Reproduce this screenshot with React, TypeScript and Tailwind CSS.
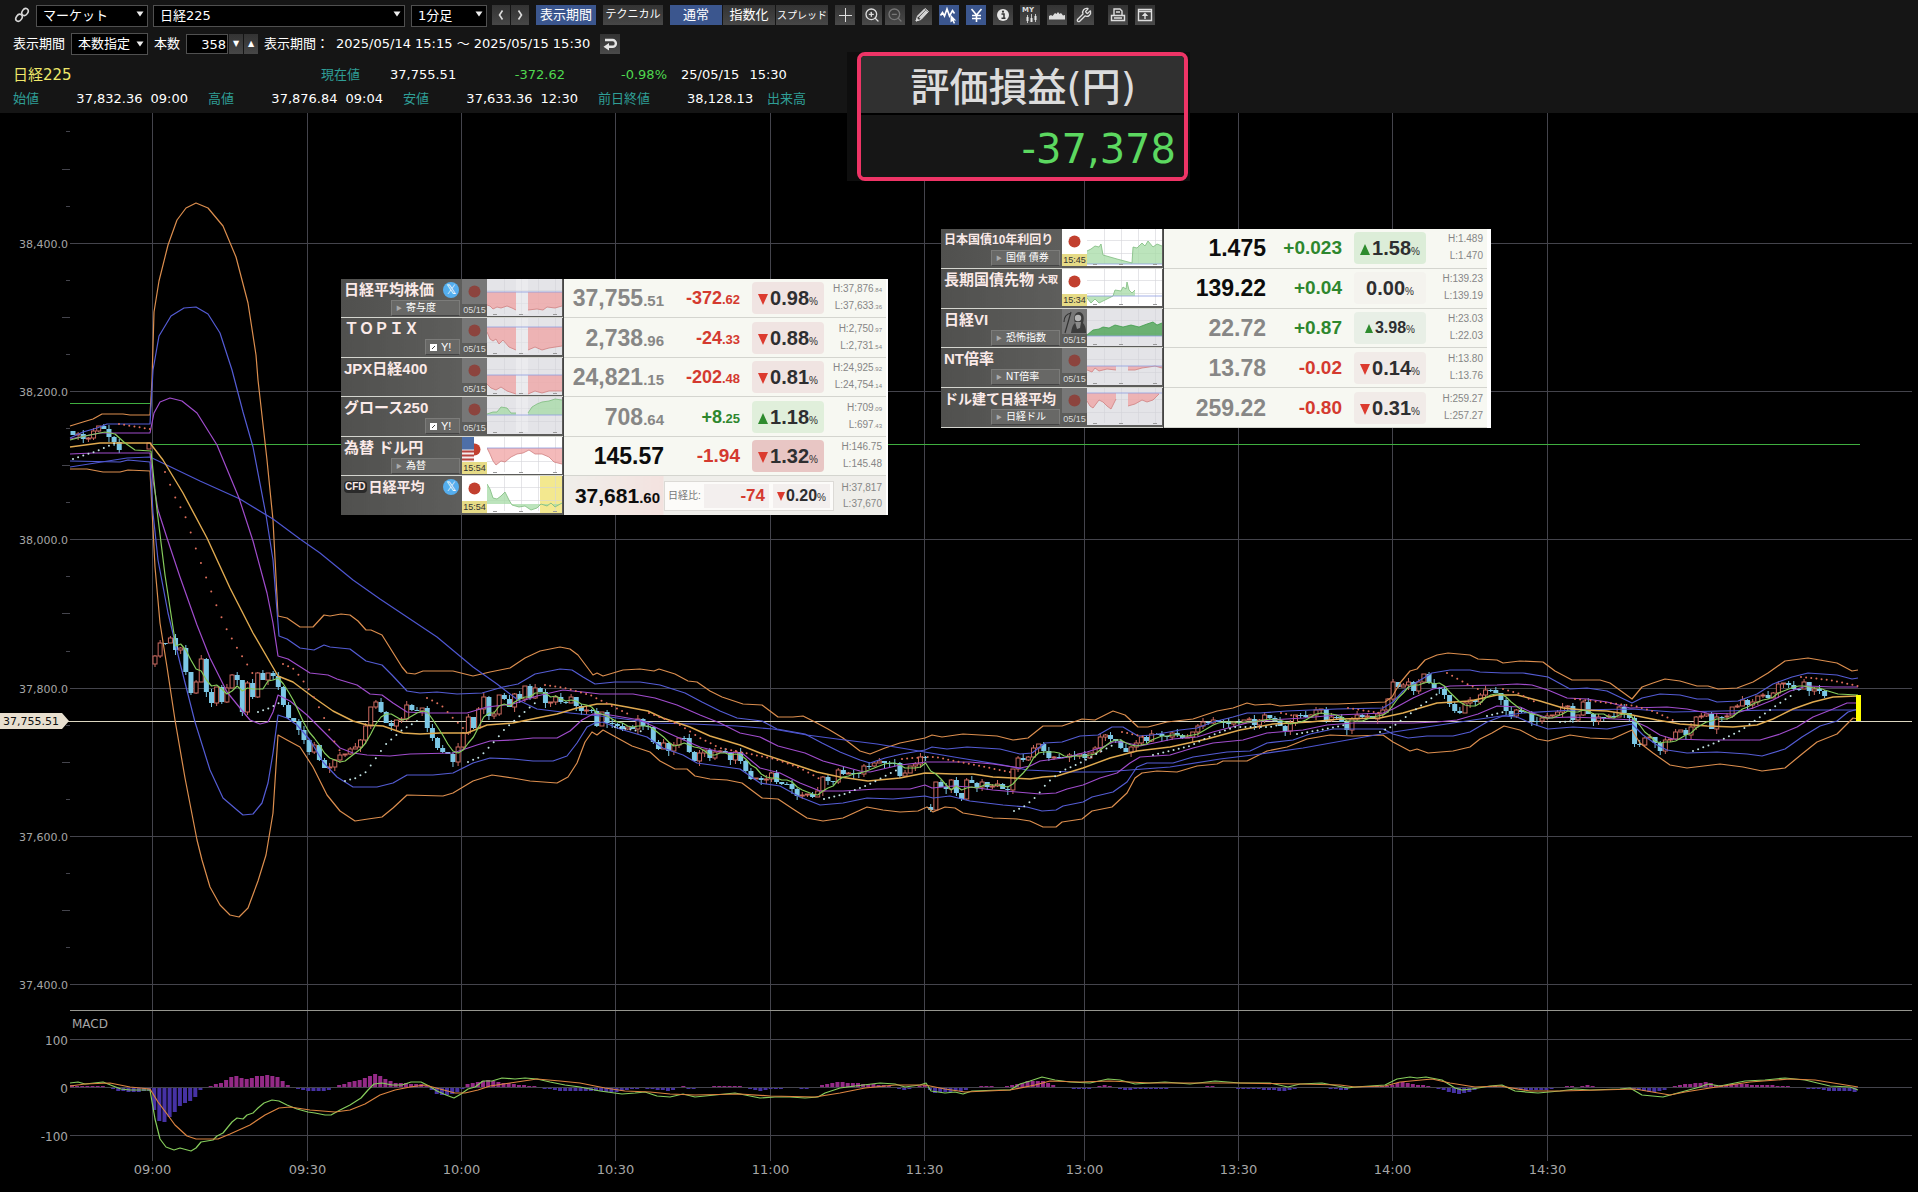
import type { ReactNode } from "react"
import { ZoomIn, ZoomOut, Wrench } from "lucide-react"

type Point = [number, number]

const UI_FONT = "font-['DejaVu_Sans','Noto_Sans_CJK_JP',sans-serif]"
const BOARD_FONT = "font-['Liberation_Sans','Noto_Sans_CJK_JP',sans-serif]"

/* ---------- chart data (svg units) ---------- */

const upper3: Point[] = [
  [70, 426], [83, 422], [93, 419], [102, 414], [123, 414], [130, 415], [150, 415], [152, 380], [154, 312], [159, 281],
  [168, 245], [177, 220], [186, 208], [196, 203], [208, 208], [223, 226], [236, 257], [248, 303], [256, 355], [258, 380],
  [267, 460], [273, 520], [278, 616], [287, 618], [300, 627], [313, 627], [324, 615], [330, 616], [341, 614], [350, 615],
  [358, 621], [366, 630], [371, 630], [382, 635], [392, 651], [402, 667], [407, 673], [415, 674], [423, 671], [453, 671],
  [473, 676], [490, 672], [510, 668], [525, 658], [540, 651], [560, 647], [570, 649], [578, 655], [587, 667], [593, 675],
  [597, 673], [603, 676], [623, 670], [640, 669], [654, 671], [659, 669], [675, 674], [688, 681], [697, 682], [710, 691],
  [722, 697], [743, 704], [762, 705], [778, 717], [793, 717], [803, 716], [815, 722], [828, 729], [843, 738], [860, 751],
  [870, 754], [885, 748], [900, 743], [925, 738], [932, 735], [942, 737], [963, 734], [997, 736], [1013, 740], [1028, 738],
  [1043, 726], [1062, 726], [1082, 719], [1095, 720], [1113, 711], [1125, 715], [1138, 727], [1148, 727], [1167, 722],
  [1193, 719], [1217, 711], [1233, 708], [1247, 703], [1255, 705], [1270, 704], [1280, 706], [1307, 704], [1337, 704],
  [1385, 702], [1392, 697], [1400, 683], [1410, 671], [1417, 669], [1425, 660], [1437, 655], [1448, 653], [1470, 655],
  [1478, 659], [1497, 660], [1503, 663], [1520, 661], [1543, 662], [1555, 671], [1572, 680], [1600, 680], [1610, 683],
  [1632, 699], [1642, 687], [1653, 683], [1665, 679], [1680, 681], [1697, 686], [1708, 686], [1718, 689], [1737, 688],
  [1753, 682], [1768, 673], [1785, 661], [1808, 658], [1837, 663], [1852, 671], [1858, 670],
]

const upper2: Point[] = [
  [70, 438], [83, 432], [97, 428], [107, 424], [120, 424], [150, 424], [153, 370], [159, 336], [171, 316], [184, 308],
  [196, 307], [208, 314], [220, 333], [232, 370], [243, 412], [253, 447], [266, 515], [273, 560], [279, 636], [287, 639],
  [300, 648], [314, 650], [324, 645], [330, 647], [350, 649], [366, 661], [382, 665], [392, 675], [407, 691], [420, 693],
  [437, 692], [457, 694], [482, 693], [503, 687], [518, 684], [535, 674], [560, 669], [572, 670], [583, 677], [595, 684],
  [615, 682], [640, 682], [660, 685], [685, 693], [702, 702], [720, 711], [737, 718], [762, 721], [777, 729], [805, 734],
  [822, 743], [840, 752], [860, 760], [870, 763], [885, 758], [902, 754], [925, 750], [932, 747], [947, 749], [967, 747],
  [1000, 749], [1020, 754], [1032, 753], [1045, 743], [1062, 742], [1080, 736], [1098, 735], [1112, 727], [1123, 727],
  [1138, 736], [1153, 735], [1180, 730], [1197, 728], [1213, 722], [1233, 717], [1247, 713], [1260, 713], [1287, 711],
  [1337, 709], [1383, 708], [1393, 702], [1403, 691], [1417, 682], [1432, 673], [1450, 670], [1470, 670], [1480, 672],
  [1503, 673], [1523, 673], [1548, 677], [1570, 689], [1587, 688], [1607, 691], [1632, 703], [1642, 698], [1660, 694],
  [1680, 695], [1697, 699], [1708, 699], [1717, 702], [1738, 701], [1757, 694], [1773, 684], [1792, 677], [1808, 673],
  [1837, 675], [1852, 679], [1858, 678],
]

const upper1: Point[] = [
  [70, 439], [100, 433], [150, 433], [154, 413], [160, 402], [170, 398], [182, 401], [197, 413], [217, 445], [239, 498],
  [253, 541], [267, 593], [273, 623], [278, 656], [288, 659], [310, 673], [328, 675], [337, 679], [357, 685], [370, 694],
  [382, 695], [393, 703], [407, 712], [427, 713], [467, 713], [487, 707], [513, 704], [537, 696], [563, 690], [583, 692],
  [600, 694], [633, 694], [655, 698], [677, 705], [700, 715], [720, 723], [740, 733], [760, 737], [778, 746], [805, 753],
  [823, 761], [860, 771], [870, 772], [900, 765], [927, 762], [970, 762], [993, 764], [1020, 768], [1030, 766], [1040, 761],
  [1063, 758], [1087, 752], [1103, 747], [1113, 742], [1123, 742], [1140, 746], [1173, 739], [1197, 737], [1213, 732],
  [1247, 723], [1270, 720], [1303, 718], [1337, 715], [1383, 713], [1393, 709], [1413, 698], [1433, 689], [1450, 686],
  [1497, 685], [1517, 684], [1532, 685], [1548, 690], [1567, 698], [1587, 699], [1607, 702], [1630, 708], [1667, 707],
  [1687, 709], [1707, 713], [1733, 714], [1753, 708], [1773, 700], [1790, 691], [1807, 686], [1833, 687], [1858, 687],
]

const average25: Point[] = [
  [70, 447], [100, 443], [133, 443], [150, 443], [163, 460], [183, 493], [207, 538], [230, 588], [253, 633], [278, 676],
  [293, 682], [313, 697], [333, 711], [353, 721], [367, 725], [383, 726], [403, 733], [420, 734], [440, 733], [467, 733],
  [487, 725], [513, 723], [537, 718], [557, 714], [577, 708], [597, 704], [610, 704], [627, 707], [648, 711], [663, 718],
  [690, 727], [710, 736], [740, 745], [760, 753], [793, 764], [817, 772], [840, 777], [868, 781], [900, 778], [925, 773],
  [953, 774], [973, 774], [993, 777], [1013, 778], [1030, 779], [1043, 777], [1057, 776], [1083, 768], [1110, 758],
  [1137, 751], [1170, 747], [1207, 739], [1240, 730], [1273, 724], [1310, 722], [1340, 719], [1380, 718], [1403, 713],
  [1420, 708], [1437, 703], [1470, 701], [1497, 695], [1517, 695], [1540, 701], [1563, 708], [1583, 710], [1607, 711],
  [1632, 715], [1657, 720], [1680, 724], [1707, 726], [1733, 727], [1757, 725], [1773, 719], [1793, 709], [1813, 702],
  [1833, 697], [1857, 696],
]

const lower1: Point[] = [
  [70, 454], [93, 453], [150, 453], [153, 480], [158, 510], [167, 538], [180, 577], [197, 625], [210, 658], [227, 692],
  [240, 708], [250, 720], [260, 724], [268, 722], [273, 712], [278, 695], [290, 701], [307, 715], [320, 728], [340, 748],
  [353, 753], [367, 755], [390, 756], [410, 754], [453, 753], [477, 745], [490, 741], [513, 740], [533, 738], [557, 738],
  [570, 731], [582, 720], [593, 714], [610, 715], [640, 720], [657, 728], [677, 737], [700, 747], [720, 752], [742, 753],
  [760, 768], [780, 773], [800, 783], [820, 791], [843, 791], [877, 789], [910, 789], [925, 785], [932, 788], [953, 786],
  [970, 787], [993, 790], [1017, 792], [1040, 794], [1056, 793], [1067, 789], [1083, 785], [1100, 778], [1117, 773],
  [1130, 763], [1140, 757], [1170, 755], [1193, 748], [1213, 743], [1243, 740], [1267, 733], [1303, 730], [1327, 725],
  [1353, 723], [1387, 723], [1413, 723], [1437, 722], [1457, 720], [1478, 714], [1497, 706], [1520, 707], [1533, 713],
  [1548, 718], [1570, 717], [1597, 718], [1632, 720], [1647, 727], [1660, 735], [1673, 739], [1707, 740], [1760, 740],
  [1780, 734], [1797, 727], [1813, 717], [1833, 709], [1847, 703], [1858, 703],
]

const lower2: Point[] = [
  [70, 461], [120, 462], [128, 460], [150, 462], [153, 513], [158, 560], [168, 613], [180, 663], [195, 722], [210, 770],
  [223, 798], [237, 810], [243, 815], [253, 814], [262, 803], [268, 783], [273, 753], [278, 715], [287, 718], [297, 725],
  [310, 740], [323, 762], [337, 777], [353, 787], [377, 787], [393, 783], [407, 775], [433, 775], [453, 773], [473, 763],
  [490, 758], [513, 759], [533, 761], [553, 761], [567, 756], [577, 743], [587, 727], [595, 723], [603, 722], [620, 729],
  [647, 737], [663, 748], [683, 755], [697, 763], [740, 769], [760, 783], [780, 786], [800, 797], [820, 805], [843, 803],
  [867, 798], [893, 799], [925, 796], [933, 798], [950, 796], [970, 801], [1003, 805], [1027, 807], [1042, 811],
  [1056, 810], [1063, 806], [1083, 802], [1092, 797], [1113, 792], [1127, 782], [1137, 767], [1147, 763], [1173, 763],
  [1193, 757], [1227, 752], [1250, 751], [1267, 743], [1293, 740], [1310, 734], [1333, 729], [1383, 729], [1393, 734],
  [1408, 738], [1427, 736], [1453, 736], [1470, 732], [1487, 722], [1503, 716], [1517, 717], [1533, 724], [1548, 729],
  [1573, 727], [1607, 729], [1632, 724], [1643, 735], [1657, 745], [1667, 750], [1687, 753], [1717, 752], [1747, 754],
  [1762, 756], [1785, 749], [1802, 737], [1820, 726], [1837, 721], [1848, 712], [1858, 709],
]

const lower3: Point[] = [
  [70, 469], [87, 469], [103, 472], [120, 472], [128, 470], [150, 471], [155, 567], [160, 623], [167, 667], [175, 720],
  [185, 778], [197, 840], [202, 860], [210, 887], [220, 905], [230, 915], [239, 917], [248, 908], [258, 881], [266, 855],
  [273, 813], [278, 735], [287, 740], [300, 747], [313, 767], [327, 795], [340, 811], [355, 821], [368, 819], [382, 817],
  [393, 808], [407, 795], [443, 796], [453, 793], [473, 781], [492, 775], [513, 778], [530, 781], [557, 783], [568, 777],
  [577, 763], [585, 742], [592, 732], [597, 735], [603, 730], [632, 746], [650, 752], [660, 761], [675, 769], [687, 769],
  [695, 776], [710, 779], [727, 780], [742, 783], [762, 798], [778, 799], [793, 809], [807, 818], [823, 821], [843, 818],
  [867, 807], [883, 810], [900, 812], [918, 811], [927, 807], [933, 812], [945, 807], [955, 808], [963, 813], [993, 818],
  [1017, 819], [1030, 821], [1043, 827], [1056, 827], [1062, 822], [1082, 819], [1092, 811], [1112, 807], [1127, 793],
  [1135, 778], [1142, 773], [1157, 771], [1177, 772], [1197, 766], [1217, 764], [1223, 761], [1247, 761], [1267, 751],
  [1287, 747], [1307, 739], [1330, 735], [1353, 736], [1383, 735], [1393, 742], [1410, 751], [1417, 749], [1428, 753],
  [1453, 751], [1470, 747], [1480, 739], [1492, 733], [1504, 726], [1520, 730], [1537, 739], [1548, 741], [1570, 735],
  [1590, 738], [1612, 739], [1632, 730], [1640, 743], [1653, 753], [1670, 765], [1687, 768], [1720, 764], [1743, 767],
  [1762, 771], [1785, 768], [1802, 754], [1817, 742], [1837, 734], [1853, 718], [1858, 719],
]

const average75: Point[] = [
  [70, 467], [127, 458], [150, 457], [200, 481], [240, 499], [273, 519], [300, 539], [320, 553], [353, 580], [380, 599],
  [407, 617], [437, 637], [473, 667], [497, 684], [518, 700], [537, 709], [570, 713], [610, 717], [653, 723], [693, 724],
  [737, 726], [773, 729], [807, 735], [837, 739], [877, 744], [913, 750], [960, 758], [1003, 765], [1027, 770],
  [1070, 772], [1103, 772], [1130, 770], [1170, 767], [1220, 759], [1253, 755], [1303, 748], [1353, 739], [1387, 733],
  [1420, 728], [1453, 723], [1487, 718], [1523, 713], [1573, 710], [1632, 709], [1673, 712], [1773, 710], [1858, 710],
]

// one close per minute from 09:00
const closes = [
  656, 643, 643, 638, 650, 648, 672, 693, 682, 659, 692, 703, 687, 702, 688, 675, 680, 712, 683, 697,
  673, 680, 673, 676, 687, 705, 718, 721, 730, 740, 752, 745, 760, 768, 767, 760, 755, 754, 749, 747,
  740, 726, 707, 702, 712, 723, 726, 720, 719, 705, 710, 711, 708, 728, 738, 748, 752, 754, 762, 747,
  733, 717, 728, 709, 697, 716, 714, 695, 699, 707, 694, 699, 686, 698, 688, 692, 703, 702, 697, 702,
  703, 697, 706, 711, 710, 711, 726, 712, 723, 724, 726, 729, 727, 729, 719, 726, 727, 742, 749, 743,
  751, 745, 738, 738, 752, 761, 753, 750, 758, 752, 751, 753, 760, 752, 761, 771, 779, 778, 780, 779,
  773, 782, 784, 784, 789, 796, 795, 794, 797, 791, 777, 781, 782, 770, 774, 773, 773, 774, 766, 766,
  763, 761, 763, 763, 763, 776, 773, 766, 764, 757, 757, 810, 782, 787, 789, 780, 793, 799, 780, 783,
  787, 782, 787, 786, 784, 789, 790, 769, 758, 760, 757, 748, 744, 751, 758, 757, 757, 757, 755, 756,
  754, 758, 753, 748, 737, 735, 739, 741, 748, 752, 747, 743, 737, 741, 734, 734, 736, 737, 733, 735,
  738, 737, 732, 726, 722, 723, 720, 722, 722, 724, 722, 723, 720, 719, 725, 720, 715, 718, 721, 726,
  731, 723, 715, 715, 717, 715, 710, 709, 720, 717, 717, 722, 730, 719, 715, 717, 716, 719, 714, 710,
  699, 682, 687, 685, 682, 691, 682, 674, 683, 688, 689, 695, 704, 711, 713, 703, 700, 702, 695, 690,
  690, 693, 700, 711, 716, 710, 712, 713, 721, 721, 718, 716, 715, 712, 707, 706, 720, 715, 702, 714,
  721, 717, 717, 716, 717, 707, 713, 718, 744, 745, 738, 737, 743, 751, 740, 739, 732, 730, 735, 727,
  717, 716, 714, 729, 717, 717, 716, 707, 706, 700, 705, 702, 696, 695, 698, 693, 684, 683, 685, 689,
  689, 682, 691, 689, 691, 696,
]

const previousCloses = [435, 434, 439, 438, 431, 426, 429, 437, 442, 450]

const sarAbove: Point[][] = [
  [[119, 424], [150, 429]],
  [[165, 472], [175, 497], [186, 518], [196, 549], [207, 580], [217, 607], [227, 630], [237, 648], [253, 674]],
  [[283, 664], [294, 669], [304, 682], [315, 699], [325, 720], [335, 743], [340, 751]],
  [[427, 698], [437, 703], [443, 707], [453, 718], [463, 728]],
  [[545, 685], [565, 688], [590, 695], [612, 706], [632, 716]],
  [[649, 713], [680, 725], [700, 738], [720, 748], [745, 753], [775, 759], [800, 768], [820, 779]],
  [[902, 759], [925, 757], [935, 757], [975, 765], [1010, 772]],
  [[1122, 732], [1145, 737]],
  [[1281, 713], [1300, 717]],
  [[1348, 708], [1380, 713]],
  [[1447, 673], [1465, 683], [1482, 691]],
  [[1503, 689], [1520, 694], [1535, 702]],
  [[1575, 699], [1600, 702], [1635, 706], [1655, 712], [1675, 721]],
  [[1801, 677], [1830, 680], [1858, 686]],
]

const sarBelow: Point[][] = [
  [[73, 459], [97, 451], [115, 443]],
  [[258, 712], [270, 708], [279, 703]],
  [[345, 781], [356, 778], [366, 772], [376, 758], [386, 744], [402, 730], [422, 718]],
  [[468, 762], [480, 757], [494, 742], [504, 730], [515, 720], [535, 703]],
  [[615, 727], [645, 732]],
  [[824, 799], [845, 794], [870, 784], [885, 776], [897, 770]],
  [[1014, 811], [1025, 806], [1037, 796], [1047, 783], [1060, 772], [1080, 763], [1100, 752], [1113, 745]],
  [[1153, 755], [1190, 746], [1215, 734], [1235, 727], [1270, 727], [1283, 724]],
  [[1297, 734], [1320, 730], [1345, 725]],
  [[1380, 732], [1395, 725], [1415, 710], [1440, 692]],
  [[1487, 716], [1503, 712]],
  [[1560, 722], [1575, 721]],
  [[1693, 751], [1715, 743], [1740, 731], [1760, 717], [1780, 703], [1795, 693]],
]

const macdLine: Point[] = [
  [70, 1083], [78, 1082], [85, 1084], [103, 1082], [113, 1086], [121, 1089], [130, 1090], [150, 1090], [155, 1119],
  [160, 1139], [166, 1147], [174, 1150], [180, 1148], [191, 1151], [196, 1148], [201, 1142], [213, 1140], [217, 1136],
  [223, 1133], [232, 1122], [237, 1118], [243, 1119], [247, 1115], [253, 1113], [258, 1108], [264, 1103], [272, 1100],
  [279, 1101], [287, 1105], [297, 1109], [308, 1112], [315, 1113], [325, 1115], [331, 1115], [340, 1110], [350, 1105],
  [361, 1098], [368, 1090], [374, 1084], [382, 1083], [392, 1085], [402, 1085], [411, 1082], [421, 1082], [429, 1086],
  [437, 1091], [446, 1095], [454, 1098], [461, 1094], [468, 1089], [475, 1087], [483, 1081], [492, 1081], [502, 1078],
  [515, 1079], [525, 1078], [537, 1079], [550, 1082], [565, 1085], [580, 1087], [600, 1091], [622, 1094], [635, 1093],
  [645, 1092], [657, 1096], [670, 1097], [683, 1094], [695, 1097], [715, 1095], [735, 1093], [745, 1095], [760, 1098],
  [775, 1097], [790, 1097], [805, 1098], [818, 1097], [825, 1093], [840, 1088], [855, 1086], [880, 1083], [895, 1084],
  [905, 1087], [920, 1085], [926, 1083], [931, 1091], [945, 1093], [955, 1092], [963, 1094], [972, 1091], [1000, 1090],
  [1010, 1090], [1020, 1084], [1030, 1081], [1042, 1077], [1055, 1080], [1070, 1082], [1090, 1083], [1108, 1079],
  [1120, 1080], [1135, 1084], [1150, 1083], [1165, 1082], [1190, 1084], [1215, 1081], [1240, 1083], [1270, 1083],
  [1288, 1087], [1300, 1084], [1322, 1083], [1348, 1088], [1355, 1087], [1385, 1085], [1397, 1079], [1410, 1077],
  [1417, 1078], [1426, 1077], [1442, 1080], [1455, 1088], [1462, 1090], [1472, 1089], [1490, 1086], [1502, 1085],
  [1515, 1091], [1538, 1093], [1560, 1091], [1575, 1089], [1590, 1090], [1620, 1089], [1630, 1088], [1642, 1095],
  [1663, 1097], [1685, 1091], [1700, 1087], [1708, 1084], [1720, 1086], [1745, 1081], [1765, 1080], [1785, 1078],
  [1805, 1080], [1830, 1086], [1850, 1087], [1858, 1090],
]

const signalLine: Point[] = [
  [70, 1086], [85, 1084], [110, 1083], [130, 1087], [150, 1089], [158, 1102], [167, 1114], [175, 1125], [187, 1136],
  [196, 1139], [218, 1139], [230, 1134], [250, 1125], [265, 1115], [279, 1108], [290, 1107], [310, 1110], [335, 1112],
  [350, 1110], [365, 1104], [380, 1095], [395, 1090], [410, 1087], [425, 1085], [440, 1089], [455, 1093], [465, 1093],
  [478, 1090], [490, 1086], [510, 1083], [537, 1079], [560, 1081], [580, 1083], [605, 1088], [625, 1091], [650, 1092],
  [670, 1094], [695, 1095], [740, 1094], [770, 1096], [815, 1097], [840, 1093], [865, 1088], [895, 1085], [925, 1085],
  [945, 1089], [965, 1092], [1010, 1090], [1035, 1085], [1050, 1081], [1080, 1082], [1110, 1081], [1150, 1083],
  [1200, 1083], [1240, 1083], [1300, 1084], [1340, 1085], [1355, 1087], [1385, 1086], [1400, 1082], [1432, 1079],
  [1450, 1083], [1475, 1087], [1500, 1086], [1530, 1091], [1560, 1091], [1600, 1090], [1635, 1089], [1670, 1095],
  [1685, 1092], [1710, 1088], [1750, 1082], [1790, 1079], [1815, 1080], [1858, 1087],
]

// height of the histogram above (+) or below (-) the zero line
const histogram: Point[] = [
  [72, 2], [80, 1], [100, 1], [112, 0], [118, -3], [130, -4], [150, -3], [155, -26], [160, -34], [165, -34], [175, -24],
  [180, -18], [190, -13], [196, -9], [201, -1], [208, 0], [216, 3], [221, 4], [227, 7], [232, 10], [237, 11], [243, 8],
  [252, 9], [258, 11], [268, 12], [273, 11], [279, 9], [284, 5], [289, 1], [294, 0], [299, -1], [308, -3], [326, -3],
  [335, 0], [340, 2], [350, 5], [361, 7], [366, 9], [371, 12], [376, 13], [381, 11], [386, 8], [397, 4], [420, 3],
  [426, 1], [431, -2], [437, -6], [446, -7], [455, -6], [461, -2], [467, 3], [478, 5], [487, 7], [500, 5], [513, 3],
  [531, 1], [540, 0], [547, -1], [562, -3], [589, -3], [616, -4], [634, -1], [643, 0], [656, -2], [670, -3], [683, 1],
  [690, -2], [700, 0], [722, 1], [738, 1], [746, 0], [752, -2], [760, -3], [770, -1], [795, 0], [802, -1], [815, 0],
  [819, 1], [824, 3], [840, 5], [853, 4], [885, 2], [895, 0], [906, -2], [915, 0], [925, 2], [929, 0], [932, -5],
  [945, -4], [962, -3], [970, 0], [985, 1], [1005, 0], [1012, 2], [1020, 4], [1030, 6], [1045, 6], [1052, 2], [1060, 0],
  [1085, -1], [1095, 0], [1105, 2], [1113, 0], [1125, -2], [1140, -1], [1200, 0], [1210, 1], [1220, 0], [1250, -1],
  [1285, -3], [1300, 0], [1320, 0], [1345, -2], [1352, 0], [1390, 1], [1397, 4], [1405, 5], [1415, 2], [1425, 2],
  [1432, 0], [1440, -1], [1448, -4], [1460, -6], [1470, -4], [1478, 0], [1495, 1], [1510, -1], [1530, -2], [1545, -2],
  [1560, 0], [1570, 2], [1578, 0], [1586, 2], [1595, 0], [1630, 0], [1637, -2], [1650, -4], [1662, -3], [1670, 0],
  [1680, 2], [1695, 4], [1708, 5], [1715, 2], [1740, 3], [1760, 2], [1785, 1], [1795, 0], [1815, -1], [1830, -3],
  [1850, -3], [1858, -5],
]

/* ---------- chart helpers ---------- */

const STEP = 1703 / 331.5

function toPath(points: Point[]) {
  return points.map(([x, y], i) => `${i === 0 ? "M" : "L"}${x} ${y}`).join(" ")
}

function valueAt(points: Point[], x: number) {
  for (let i = 1; i < points.length; i++) {
    const [x0, y0] = points[i - 1]
    const [x1, y1] = points[i]
    if (x <= x1) return y0 + ((x - x0) / (x1 - x0)) * (y1 - y0)
  }
  return points[points.length - 1][1]
}

function priceToY(price: number) {
  return Math.round(391 + (38200 - price) * 0.7415) + 0.5
}

const average5: Point[] = [
  [70, 440], [85, 436], [105, 432], [115, 434], [125, 443], [135, 450], [151, 451], [157, 510], [165, 575], [174, 634],
  ...closes.slice(4).map((_, i): Point => {
    const sum = closes.slice(i, i + 5).reduce((a, b) => a + b, 0)
    return [155 + (i + 4) * STEP, Math.round(sum / 5)]
  }),
  [1838, 694], [1858, 695],
]

function Candle({ x, open, close, index }: { x: number; open: number; close: number; index: number }) {
  const up = close < open
  const top = Math.min(open, close)
  const height = Math.max(Math.abs(open - close), 1)
  const wickTop = (index * 7) % 5
  const wickBottom = (index * 11) % 6
  if (up) {
    return (
      <g stroke="#cc6a60" fill="none">
        <path d={`M${x} ${top - wickTop}V${top}M${x} ${top + height}v${wickBottom}`} />
        <rect x={x - 2} y={top} width={4} height={height} fill="#000" />
      </g>
    )
  }
  return (
    <g fill="#7cc8e6">
      <rect x={x - 0.5} y={top - wickTop} width={1} height={height + wickTop + wickBottom} />
      <rect x={x - 2.5} y={top} width={5} height={height} />
    </g>
  )
}

function Dots({ segments, color }: { segments: Point[][]; color: string }) {
  return (
    <g fill={color}>
      {segments.map((segment, s) => {
        const start = segment[0][0]
        const count = Math.floor((segment[segment.length - 1][0] - start) / STEP) + 1
        return Array.from({ length: count }, (_, i) => {
          const x = start + i * STEP
          return <circle key={`${s}-${i}`} cx={x} cy={valueAt(segment, x)} r={1} />
        })
      })}
    </g>
  )
}

const timeMarks = [
  { x: 152.5, label: "09:00" },
  { x: 307.5, label: "09:30" },
  { x: 461.5, label: "10:00" },
  { x: 615.5, label: "10:30" },
  { x: 770.5, label: "11:00" },
  { x: 924.5, label: "11:30" },
  { x: 1084.5, label: "13:00" },
  { x: 1238.5, label: "13:30" },
  { x: 1392.5, label: "14:00" },
  { x: 1547.5, label: "14:30" },
]

const priceMarks = [38400, 38200, 38000, 37800, 37600, 37400]
const minorMarks = Array.from({ length: 24 }, (_, i) => 38550 - i * 50).filter((p) => p % 200 !== 0)

const macdMarks = [
  { y: 1039.5, label: "100" },
  { y: 1087.5, label: "0" },
  { y: 1135.5, label: "-100" },
]

const bands = [
  { points: upper3, color: "#dc8e4e" },
  { points: lower3, color: "#dc8e4e" },
  { points: upper2, color: "#545cd4" },
  { points: lower2, color: "#545cd4" },
  { points: average75, color: "#4e56d0" },
  { points: upper1, color: "#a04ccc" },
  { points: lower1, color: "#a04ccc" },
]

function PriceChart() {
  return (
    <svg viewBox="0 113 1918 1079" className="block w-full" role="img" aria-label="日経225 1分足">
      <g stroke="#44444c" shapeRendering="crispEdges">
        {timeMarks.map((t) => (
          <line key={t.label} x1={t.x} x2={t.x} y1={113} y2={1161} />
        ))}
        {priceMarks.map((p) => (
          <line key={p} x1={70} x2={1912} y1={priceToY(p)} y2={priceToY(p)} />
        ))}
        {macdMarks.map((m) => (
          <line key={m.label} x1={70} x2={1912} y1={m.y} y2={m.y} />
        ))}
        {minorMarks.map((p) => (
          <line key={p} x1={p % 100 === 0 ? 62 : 66} x2={70} y1={priceToY(p)} y2={priceToY(p)} />
        ))}
      </g>
      <line x1={70} x2={1912} y1={1010.5} y2={1010.5} stroke="#96968f" />

      <g fill="#a6a6a6" fontSize={11} fontFamily="DejaVu Sans, sans-serif">
        {priceMarks.map((p) => (
          <text key={p} x={68} y={priceToY(p) + 4} textAnchor="end">
            {p.toLocaleString("en-US", { minimumFractionDigits: 1 })}
          </text>
        ))}
        {macdMarks.map((m) => (
          <text key={m.label} x={68} y={m.y + 5} textAnchor="end" fontSize={12}>
            {m.label}
          </text>
        ))}
        {timeMarks.map((t) => (
          <text key={t.label} x={t.x} y={1174} textAnchor="middle" fontSize={13}>
            {t.label}
          </text>
        ))}
        <text x={72} y={1028} fontSize={12}>
          MACD
        </text>
      </g>

      {/* previous close */}
      <g stroke="#3fae3f">
        <line x1={70} x2={151} y1={403.5} y2={403.5} />
        <line x1={153} x2={1860} y1={444.5} y2={444.5} />
      </g>

      <line x1={68} x2={1912} y1={721.5} y2={721.5} stroke="#dcd6c0" />

      {previousCloses.map((close, i) => (
        <Candle key={i} x={73 + i * STEP} open={i === 0 ? 431 : previousCloses[i - 1]} close={close} index={i} />
      ))}
      <Candle x={149} open={449} close={443} index={0} />
      {closes.map((close, i) => {
        const previous = i === 0 ? 664 : closes[i - 1]
        // first bar after the lunch break opens near its own close
        const open = Math.abs(previous - close) > 40 ? close - 3 : previous
        return <Candle key={i} x={155 + i * STEP} open={open} close={close} index={i + 3} />
      })}

      <g fill="none" strokeWidth={1.2} strokeLinejoin="round">
        {bands.map((band, i) => (
          <path key={i} d={toPath(band.points)} stroke={band.color} />
        ))}
        <path d={toPath(average25)} stroke="#e0aa50" strokeWidth={1.4} />
        <path d={toPath(average5)} stroke="#86cc5c" />
      </g>
      <Dots segments={sarAbove} color="#e0705c" />
      <Dots segments={sarBelow} color="#c4e4e4" />
      <rect x={1856} y={695} width={5} height={26} fill="#ffff00" />

      <path d="M0 713H62L69 721L62 729H0Z" fill="#e8dfcf" />
      <text x={3} y={725} fontSize={11} fontFamily="DejaVu Sans, sans-serif" fill="#111">
        37,755.51
      </text>

      {Array.from({ length: 348 }, (_, i) => {
        const x = 72 + i * STEP
        const value = Math.round(valueAt(histogram, x))
        if (value === 0) return null
        return (
          <rect
            key={i}
            x={x - 2}
            y={value > 0 ? 1087 - value : 1088}
            width={4}
            height={Math.abs(value)}
            fill={value > 0 ? "#942a86" : "#4632a4"}
          />
        )
      })}
      <g fill="none" strokeWidth={1.2} strokeLinejoin="round">
        <path d={toPath(macdLine)} stroke="#86cc5c" />
        <path d={toPath(signalLine)} stroke="#dc8440" />
      </g>
    </svg>
  )
}

/* ---------- toolbar ---------- */

function SelectBox({ label, value, className }: { label: string; value: string; className: string }) {
  return (
    <div className={`relative shrink-0 ${className}`}>
      <select
        aria-label={label}
        className="h-[22px] w-full appearance-none border border-[#505050] bg-black pl-1.5 text-[13px] leading-5 text-white"
      >
        <option>{value}</option>
      </select>
      <svg viewBox="0 0 8 6" className="pointer-events-none absolute top-2 right-1 h-1.5 w-2" fill="#eee">
        <path d="M0.5 0.5h7L4 5.5z" />
      </svg>
    </div>
  )
}

function ToolButton({ active, label, className, children }: { active?: boolean; label?: string; className?: string; children: ReactNode }) {
  return (
    <button
      aria-label={label}
      className={`flex h-5 shrink-0 items-center justify-center whitespace-nowrap text-white ${
        active ? "bg-[#3b568e]" : "bg-linear-to-b from-[#333] to-[#474747]"
      } ${className || ""}`}
    >
      {children}
    </button>
  )
}

function IconButton({ label, active, children }: { label: string; active?: boolean; children: ReactNode }) {
  return (
    <button
      aria-label={label}
      className={`flex size-5 shrink-0 items-center justify-center text-[#dedede] ${
        active ? "bg-[#3b568e]" : "bg-linear-to-b from-[#333] to-[#4a4a4a]"
      }`}
    >
      {children}
    </button>
  )
}

function Toolbar() {
  return (
    <div className="flex h-[22px] items-center">
      <svg viewBox="0 0 18 16" className="h-4 w-[18px] shrink-0" fill="none" stroke="#d8d8d8" strokeWidth="1.6">
        <ellipse cx="6" cy="10.8" rx="2.8" ry="3.8" transform="rotate(35 6 10.8)" />
        <ellipse cx="12" cy="5" rx="2.8" ry="3.8" transform="rotate(35 12 5)" />
      </svg>
      <SelectBox label="市場" value="マーケット" className="ml-[5px] w-28" />
      <SelectBox label="銘柄" value="日経225" className="ml-[5px] w-[252px]" />
      <SelectBox label="足種" value="1分足" className="ml-1.5 w-[76px]" />
      <div className="ml-[5px] flex gap-px">
        <ToolButton label="前へ" className="w-[18px]">
          <svg viewBox="0 0 8 12" className="h-3 w-2" fill="none" stroke="#ddd" strokeWidth="1.6">
            <path d="M5.5 1.5L2.5 6l3 4.5" />
          </svg>
        </ToolButton>
        <ToolButton label="次へ" className="w-[18px]">
          <svg viewBox="0 0 8 12" className="h-3 w-2" fill="none" stroke="#ddd" strokeWidth="1.6">
            <path d="M2.5 1.5L5.5 6l-3 4.5" />
          </svg>
        </ToolButton>
      </div>
      <ToolButton active className="ml-[7px] w-[60px] text-[13px]">表示期間</ToolButton>
      <ToolButton className="ml-[7px] w-[60px] text-[11px]">テクニカル</ToolButton>
      <div className="ml-[7px] flex gap-px">
        <ToolButton active className="w-[52px] text-[13px]">通常</ToolButton>
        <ToolButton className="w-[52px] text-[13px]">指数化</ToolButton>
        <ToolButton className="w-[52px] text-[10px]">スプレッド</ToolButton>
      </div>

      <div className="ml-[7px] flex gap-[7px]">
        <IconButton label="十字線">
          <svg viewBox="0 0 20 20" className="size-5" stroke="currentColor">
            <path d="M10.5 3v14M4 10.5h13" />
          </svg>
        </IconButton>
        <div className="flex gap-[3px]">
          <IconButton label="拡大">
            <ZoomIn className="size-4" />
          </IconButton>
          <IconButton label="縮小">
            <ZoomOut className="size-4 text-[#777]" />
          </IconButton>
        </div>
        <IconButton label="描画">
          <svg viewBox="0 0 20 20" className="size-5" fill="none" stroke="currentColor">
            <path d="M4 16l1.5-5L13 3.5l3.5 3L9 14.5z" />
            <path d="M6 11.5l7-7M7.5 13l7-7.5M8.5 14l7-7.5" strokeWidth="1.2" />
            <path d="M4 16l2.5-.8L5 13.5z" fill="currentColor" />
          </svg>
        </IconButton>
        <IconButton label="チャート選択" active>
          <svg viewBox="0 0 20 20" className="size-5" fill="none" stroke="#fff" strokeWidth="1.6">
            <path d="M1.5 10.5l2-3 2 3.5 2.5-7 2.5 7 3-5.5 2 3" />
            <path d="M11.5 9.5v8l2-1.6 1.3 2.8 1.3-.6-1.3-2.7h2.4z" fill="#fff" stroke="none" />
          </svg>
        </IconButton>
        <IconButton label="円" active>
          <svg viewBox="0 0 20 20" className="size-5" fill="none" stroke="#fff" strokeWidth="1.6">
            <path d="M5.5 4l5 6 5-6M10.5 10v7M6 10.5h9M6 13.5h9" />
          </svg>
        </IconButton>
        <IconButton label="情報">
          <svg viewBox="0 0 20 20" className="size-5">
            <circle cx="10" cy="10" r="6" fill="#e6e6e6" />
            <path d="M8.5 9h2.5v4M8.5 13.3h4" stroke="#333" strokeWidth="1.5" fill="none" />
            <circle cx="10" cy="6.7" r="1.1" fill="#333" />
          </svg>
        </IconButton>
        <IconButton label="マイチャート">
          <span className="flex flex-col items-center">
            <span className="mr-1 text-[7px] leading-2 font-bold">MY</span>
            <svg viewBox="0 0 16 10" className="h-2.5 w-4" fill="#e6e6e6" stroke="#e6e6e6">
              <path d="M5.5 1v8M9.5 0v8M13.5 0v8" strokeWidth="0.8" />
              <path d="M4.5 3h2v4h-2zM8.5 4h2v4h-2zM12.5 2h2v4h-2z" stroke="none" />
            </svg>
          </span>
        </IconButton>
        <IconButton label="エリア">
          <svg viewBox="0 0 20 20" className="size-5" fill="currentColor">
            <path d="M2 14.5V11l2-1 1.5 1L8 8l1.5 1L11 7l1.5 2L14 8l2 2.5 2-.5v4.5z" />
          </svg>
        </IconButton>
        <IconButton label="設定">
          <Wrench className="size-4" />
        </IconButton>
      </div>
      <div className="ml-3.5 flex gap-[7px]">
        <IconButton label="印刷">
          <svg viewBox="0 0 20 20" className="size-5" fill="none" stroke="currentColor" strokeWidth="1.4">
            <path d="M6 10V4h6l2 2v4M3.5 10.5h13v5h-13zM6 13h8M8 7h4" />
          </svg>
        </IconButton>
        <IconButton label="別ウィンドウ">
          <svg viewBox="0 0 20 20" className="size-5" fill="none" stroke="currentColor" strokeWidth="1.4">
            <path d="M3.5 4.5h13v11h-13zM3.5 6.5h13M10 14V9" />
            <path d="M10 7.5l3.2 3.5H6.8z" fill="currentColor" stroke="none" />
          </svg>
        </IconButton>
      </div>
    </div>
  )
}

function PeriodRow() {
  return (
    <div className="mt-[7px] flex h-[22px] items-center text-[13px] text-white">
      <span className="w-[58px] shrink-0">表示期間</span>
      <SelectBox label="表示期間" value="本数指定" className="w-[77px]" />
      <label htmlFor="bars" className="ml-1.5 w-8 shrink-0">
        本数
      </label>
      <input
        id="bars"
        defaultValue="358"
        className="h-5 w-[42px] border border-[#505050] bg-black pr-px text-right text-[13px] text-white"
      />
      <div className="ml-px flex gap-px">
        <ToolButton className="w-3.5 text-[8px]">▼</ToolButton>
        <ToolButton className="w-3.5 text-[8px]">▲</ToolButton>
      </div>
      <span className="ml-1.5 w-[72px] shrink-0">表示期間：</span>
      <span className="whitespace-nowrap">2025/05/14 15:15 ～ 2025/05/15 15:30</span>
      <div className="ml-2.5">
        <IconButton label="戻す">
          <svg viewBox="0 0 20 20" className="size-5" fill="none" stroke="#e6e6e6" strokeWidth="2.4">
            <path d="M5 6h7.5a3.2 3.2 0 0 1 0 6.8H8" />
            <path d="M3.5 12.8L9 9v7.6z" fill="#e6e6e6" stroke="none" />
          </svg>
        </IconButton>
      </div>
    </div>
  )
}

function QuoteHeader() {
  const items = [
    { label: "始値", value: "37,832.36", time: "09:00" },
    { label: "高値", value: "37,876.84", time: "09:04" },
    { label: "安値", value: "37,633.36", time: "12:30" },
  ]
  return (
    <div className="mt-2 text-[13px] text-white">
      <div className="flex h-6 items-center whitespace-nowrap">
        <h1 className="w-[308px] text-[15px] text-[#f0e86a]">日経225</h1>
        <span className="w-[69px] text-[#2f9e96]">現在値</span>
        <span className="w-[66px] text-right">37,755.51</span>
        <span className="w-[109px] text-right text-[#4fd84f]">-372.62</span>
        <span className="w-[102px] text-right text-[#4fd84f]">-0.98%</span>
        <span className="ml-3.5">25/05/15</span>
        <span className="ml-2.5">15:30</span>
      </div>
      <div className="flex h-6 items-center whitespace-nowrap">
        {items.map((item) => (
          <div key={item.label} className="flex w-[195px] gap-2 pr-5">
            <span className="mr-auto text-[#2f9e96]">{item.label}</span>
            <span>{item.value}</span>
            <span>{item.time}</span>
          </div>
        ))}
        <span className="w-[89px] text-[#2f9e96]">前日終値</span>
        <span className="w-[66px] text-right">38,128.13</span>
        <span className="ml-3.5 text-[#2f9e96]">出来高</span>
      </div>
    </div>
  )
}

/* ---------- quote boards ---------- */

type Spark = { base: number; lines: Point[][]; color: "red" | "green" | "deep"; gap?: boolean; highlight?: boolean }

type Quote = {
  name: string
  note?: string
  prefix?: string
  nameClass?: string
  link?: string
  yahoo?: boolean
  social?: boolean
  flag: "jp" | "us" | "reaper"
  stamp: string
  live?: boolean
  price: [string, string?]
  change: [string, string?]
  percent: string
  percentClass: string
  compact?: boolean
  high: [string, string?]
  low: [string, string?]
  spark: Spark
}

const PALE_RED = "bg-[#f0e4e2]"
const PALE_GREEN = "bg-[#e0efdb]"

const indexQuotes: Quote[] = [
  {
    name: "日経平均株価", link: "寄与度", social: true, flag: "jp", stamp: "05/15",
    price: ["37,755", ".51"], change: ["-372", ".62"], percent: "0.98", percentClass: PALE_RED,
    high: ["H:37,876", ".84"], low: ["L:37,633", ".36"],
    spark: {
      base: 13, color: "red", gap: true,
      lines: [
        [[0, 26], [3, 27], [6, 30], [10, 28], [14, 29], [20, 27], [25, 29], [29, 31]],
        [[41, 31], [50, 30], [56, 31], [60, 28], [68, 29], [75, 27]],
      ],
    },
  },
  {
    name: "ＴＯＰＩＸ", yahoo: true, flag: "jp", stamp: "05/15",
    price: ["2,738", ".96"], change: ["-24", ".33"], percent: "0.88", percentClass: PALE_RED,
    high: ["H:2,750", ".97"], low: ["L:2,731", ".54"],
    spark: {
      base: 9, color: "red", gap: true,
      lines: [
        [[0, 14], [3, 21], [6, 23], [9, 21], [12, 26], [16, 22], [22, 29], [29, 32]],
        [[41, 32], [48, 29], [55, 32], [62, 30], [75, 28]],
      ],
    },
  },
  {
    name: "JPX日経400", flag: "jp", stamp: "05/15",
    price: ["24,821", ".15"], change: ["-202", ".48"], percent: "0.81", percentClass: PALE_RED,
    high: ["H:24,925", ".92"], low: ["L:24,754", ".14"],
    spark: {
      base: 17, color: "red", gap: true,
      lines: [
        [[0, 26], [4, 30], [9, 32], [14, 29], [20, 33], [29, 36]],
        [[41, 36], [48, 33], [55, 35], [62, 33], [75, 33]],
      ],
    },
  },
  {
    name: "グロース250", yahoo: true, flag: "jp", stamp: "05/15",
    price: ["708", ".64"], change: ["+8", ".25"], percent: "1.18", percentClass: PALE_GREEN,
    high: ["H:709", ".09"], low: ["L:697", ".43"],
    spark: {
      base: 18, color: "green", gap: true,
      lines: [
        [[0, 17], [6, 15], [10, 15], [14, 10], [20, 11], [24, 16], [29, 16]],
        [[41, 16], [45, 10], [50, 7], [55, 5], [62, 4], [68, 2], [75, 3]],
      ],
    },
  },
  {
    name: "為替 ドル円", link: "為替", flag: "us", stamp: "15:54", live: true,
    price: ["145.57"], change: ["-1.94"], percent: "1.32", percentClass: "bg-[#e8c6c4]",
    high: ["H:146.75"], low: ["L:145.48"],
    spark: {
      base: 11, color: "red",
      lines: [[[0, 11], [3, 17], [6, 24], [9, 28], [14, 24], [18, 25], [24, 20], [30, 17], [36, 16], [42, 13], [48, 17], [55, 17], [62, 20], [67, 25], [75, 27]]],
    },
  },
]

const domesticQuotes: Quote[] = [
  {
    name: "日本国債10年利回り", nameClass: "text-[12px]", link: "国債 債券", flag: "jp", stamp: "15:45", live: true,
    price: ["1.475"], change: ["+0.023"], percent: "1.58", percentClass: "bg-[#dcedd8]",
    high: ["H:1.489"], low: ["L:1.470"],
    spark: {
      base: 35, color: "green",
      lines: [[[0, 22], [4, 20], [8, 17], [12, 18], [14, 15], [16, 26], [30, 30], [45, 34], [46, 18], [50, 19], [55, 14], [58, 17], [61, 12], [66, 18], [70, 15], [75, 17]]],
    },
  },
  {
    name: "長期国債先物", note: "大取", flag: "jp", stamp: "15:34", live: true,
    price: ["139.22"], change: ["+0.04"], percent: "0.00", percentClass: "bg-[#f4f3ee]",
    high: ["H:139.23"], low: ["L:139.19"],
    spark: {
      base: 27, color: "green",
      lines: [[[0, 29], [4, 34], [8, 30], [12, 34], [16, 32], [20, 30], [26, 27], [28, 21], [34, 22], [36, 18], [39, 20], [40, 13], [42, 21], [45, 24], [48, 21]]],
    },
  },
  {
    name: "日経VI", link: "恐怖指数", flag: "reaper", stamp: "05/15",
    price: ["22.72"], change: ["+0.87"], percent: "3.98", percentClass: "bg-[#e8efe6]", compact: true,
    high: ["H:23.03"], low: ["L:22.03"],
    spark: {
      base: 27, color: "deep",
      lines: [[[0, 26], [6, 21], [12, 20], [16, 18], [22, 19], [28, 16], [36, 18], [44, 16], [52, 18], [60, 15], [66, 13], [70, 16], [75, 14]]],
    },
  },
  {
    name: "NT倍率", link: "NT倍率", flag: "jp", stamp: "05/15",
    price: ["13.78"], change: ["-0.02"], percent: "0.14", percentClass: "bg-[#f1ebe8]",
    high: ["H:13.80"], low: ["L:13.76"],
    spark: {
      base: 18, color: "red",
      lines: [
        [[0, 22], [5, 24], [8, 20], [12, 23], [20, 21], [29, 22]],
        [[41, 22], [48, 22], [55, 20], [62, 19], [68, 18], [75, 20]],
      ],
    },
  },
  {
    name: "ドル建て日経平均", nameClass: "text-sm", link: "日経ドル", flag: "jp", stamp: "05/15",
    price: ["259.22"], change: ["-0.80"], percent: "0.31", percentClass: "bg-[#f1ebe8]",
    high: ["H:259.27"], low: ["L:257.27"],
    spark: {
      base: 5, color: "red",
      lines: [
        [[0, 13], [3, 18], [6, 20], [12, 12], [16, 14], [20, 18], [24, 21], [29, 11]],
        [[41, 18], [48, 16], [55, 12], [60, 14], [66, 12], [72, 6]],
      ],
    },
  },
]

const cfdSpark: Spark = {
  base: 28, color: "green", highlight: true,
  lines: [[[0, 8], [3, 13], [6, 22], [10, 23], [14, 20], [18, 16], [22, 24], [25, 29], [32, 31], [38, 30], [44, 34], [50, 32], [54, 28], [60, 30], [64, 27], [68, 31], [75, 27]]],
}

function Sparkline({ spark, live }: { spark: Spark; live?: boolean }) {
  const stroke = { red: "#cf8080", green: "#7dbb7d", deep: "#3f9a4a" }[spark.color]
  const fill = { red: "#f0a3a3", green: "#a5dba5", deep: "#43a04b" }[spark.color]
  return (
    <svg viewBox="0 0 75 37" preserveAspectRatio="none" className="block h-[37px] w-[75px]">
      <rect width="75" height="37" fill={live ? "#fff" : "#e4e4e8"} />
      {spark.highlight && <rect x="53" width="22" height="37" fill="#f3e88f" />}
      <path d="M17.5 0v35M34.5 0v35M51.5 0v35M68.5 0v35M0 11.5h75M0 24.5h75" stroke="#d4d4d8" strokeWidth="0.6" fill="none" />
      {spark.lines.map((line, i) => (
        <g key={i}>
          <path
            d={`${toPath(line)}L${line[line.length - 1][0]} ${spark.base}L${line[0][0]} ${spark.base}Z`}
            fill={fill}
            fillOpacity={0.75}
          />
          <path d={toPath(line)} fill="none" stroke={stroke} strokeWidth="0.8" />
        </g>
      ))}
      {spark.gap && <rect x="29" width="12" height="35" fill="#fff" fillOpacity={0.25} />}
      {!spark.highlight && <path d={`M0 ${spark.base}H75`} stroke="#8d9de0" strokeWidth="0.8" />}
      <path d="M6 35.5h4M32 35.5h4M66 35.5h4" stroke="#999" />
    </svg>
  )
}

function Flag({ kind, stamp, live }: { kind: Quote["flag"]; stamp: string; live?: boolean }) {
  return (
    <div className="flex h-[37px] w-[25px] flex-col">
      <svg viewBox="0 0 25 25" className="block h-[25px] w-[25px]">
        <rect width="25" height="25" fill={live ? "#fff" : "#777"} />
        {kind === "reaper" ? (
          <g fill="#3c3c3c">
            <path d="M9 24c1-6 2-8 4-10-2-6 0-11 4-11s6 5 4 11c2 2 3 5 3 10z" />
            <circle cx="16" cy="9" r="3.2" fill="#b5b5b5" />
            <path d="M13 13l6 0-1 6-3 1z" fill="#8c8c8c" />
            <path d="M3 24L9 3M9 4C4 5 2 9 2 13" fill="none" stroke="#333" strokeWidth="1.2" />
          </g>
        ) : (
          <circle cx="12.5" cy="12.5" r="6" fill={live ? "#c2402f" : "#8c443e"} />
        )}
        {kind === "us" && (
          <g>
            <rect width="12" height="25" fill="#f3eeee" />
            <path d="M0 14.5h12M0 18.5h12M0 22.5h12" stroke="#b8433f" strokeWidth="2" />
            <rect width="12" height="12.5" fill="#4d6fa8" />
          </g>
        )}
      </svg>
      <span
        className={`h-3 text-center text-[9px] leading-3 ${live ? "bg-[#e6db86] text-[#333]" : "bg-[#5c5c5a] text-[#dcdcdc]"}`}
      >
        {stamp}
      </span>
    </div>
  )
}

function NameCell({ quote }: { quote: Pick<Quote, "name" | "note" | "prefix" | "nameClass" | "link" | "yahoo" | "social"> }) {
  return (
    <th scope="row" className="bg-linear-to-r from-[#50504e] to-[#5e5e5c] p-0 pt-px pl-[3px] text-left align-top">
      <div className="flex h-5 items-center whitespace-nowrap text-[#fbeae8]">
        {quote.prefix && (
          <span className="mr-0.5 rounded-sm bg-[#2a2a2a] px-px text-[10px] leading-3 font-bold">{quote.prefix}</span>
        )}
        <span className={`leading-5 ${quote.nameClass || "text-[15px]"}`}>{quote.name}</span>
        {quote.note && <span className="ml-1 text-[10px]">{quote.note}</span>}
        {quote.social && (
          <a
            href="#"
            className="mr-[3px] ml-auto flex size-4 items-center justify-center rounded-full bg-[#55aeee] text-[13px] leading-4 font-normal text-white"
          >
            𝕏
          </a>
        )}
      </div>
      {quote.link && (
        <button className="mr-0.5 ml-auto flex h-4 w-[69px] items-center border border-[#7c7c7a] border-b-[#444] bg-[#686866] pl-1 text-[10px] leading-3 font-normal whitespace-nowrap text-white">
          <span className="mr-1 text-[6px] text-[#aaa]">▶</span>
          {quote.link}
        </button>
      )}
      {quote.yahoo && (
        <button className="mr-0.5 ml-auto flex h-4 w-[35px] items-center gap-1 border border-[#7c7c7a] border-b-[#444] bg-[#686866] pl-1 text-[11px] leading-3 font-normal text-white">
          <svg viewBox="0 0 7 7" className="size-[7px]">
            <rect width="7" height="7" fill="#fff" />
            <path d="M2 5l3-3" stroke="#444" />
          </svg>
          Y!
        </button>
      )}
    </th>
  )
}

function Arrow({ direction, className }: { direction: "up" | "down"; className: string }) {
  return (
    <svg viewBox="0 0 10 11" className={className} fill={direction === "up" ? "#2e8b2e" : "#dc3a2e"}>
      <path d={direction === "up" ? "M5 0l5 11H0z" : "M0 0h10L5 11z"} />
    </svg>
  )
}

function QuoteRow({ quote }: { quote: Quote }) {
  const up = quote.change[0].startsWith("+")
  return (
    <tr className="border-b border-[#d4d5cf]">
      <NameCell quote={quote} />
      <td className="bg-[#5c5c5a] p-0 align-top">
        <Flag kind={quote.flag} stamp={quote.stamp} live={quote.live} />
      </td>
      <td className="border-r border-[#444] bg-[#5c5c5a] p-0 align-top">
        <Sparkline spark={quote.spark} live={quote.live} />
      </td>
      <td className={`p-0 text-right font-bold whitespace-nowrap ${quote.live ? "text-[#0c0c0c]" : "text-[#878786]"}`}>
        <span className="text-[23px] leading-8">{quote.price[0]}</span>
        <span className="text-[15px]">{quote.price[1]}</span>
      </td>
      <td className={`p-0 text-right font-bold whitespace-nowrap ${up ? "text-[#2e872e]" : "text-[#d43a2f]"}`}>
        <span className={`leading-8 ${quote.change[1] ? "text-lg" : "text-[19px]"}`}>{quote.change[0]}</span>
        <span className="text-[13px]">{quote.change[1]}</span>
      </td>
      <td className="py-0 pr-0 pl-3">
        <div
          className={`flex h-8 items-center justify-center rounded-sm font-bold text-[#2e2e30] ${quote.percentClass}`}
        >
          <span className={`flex items-baseline ${quote.compact ? "text-base" : "text-xl"}`}>
            {quote.percent !== "0.00" && (
              <Arrow direction={up ? "up" : "down"} className={quote.compact ? "mr-0.5 h-[9px] w-2" : "mr-0.5 h-[11px] w-2.5"} />
            )}
            {quote.percent}
            <span className="text-[10px] font-normal">%</span>
          </span>
        </div>
      </td>
      <td className="py-0 pr-1 text-right text-[10px] leading-4 whitespace-nowrap text-[#868686]">
        <div>
          {quote.high[0]}
          <span className="text-[6px]">{quote.high[1]}</span>
        </div>
        <div>
          {quote.low[0]}
          <span className="text-[6px]">{quote.low[1]}</span>
        </div>
      </td>
    </tr>
  )
}

function CfdRow() {
  return (
    <tr className="bg-[#efeeea]">
      <NameCell quote={{ name: "日経平均", prefix: "CFD", nameClass: "text-sm", social: true }} />
      <td className="bg-[#5c5c5a] p-0 align-top">
        <Flag kind="jp" stamp="15:54" live />
      </td>
      <td className="border-r border-[#444] bg-[#5c5c5a] p-0 align-top">
        <Sparkline spark={cfdSpark} live />
      </td>
      <td className="bg-linear-to-r from-[#efeeea] to-[#f3e2df] p-0 pr-1 text-right font-bold whitespace-nowrap text-[#0c0c0c]">
        <span className="text-[21px] leading-8">37,681</span>
        <span className="text-[15px]">.60</span>
      </td>
      <td colSpan={2} className="p-0">
        <div className="mr-[-10px] flex h-[30px] items-center border border-[#dcdad6] bg-[#fcfbf9] px-[3px] whitespace-nowrap">
          <span className="w-9 text-[10px] text-[#777]">日経比:</span>
          <span className="flex h-6 flex-1 items-center justify-end bg-[#f3efee] pr-1 text-[17px] font-bold text-[#d43a2f]">
            -74
          </span>
          <span className="ml-1 flex h-6 w-[57px] items-center justify-center bg-[#f3efee] font-bold text-[#2e2e30]">
            <span className="flex items-baseline text-base">
              <Arrow direction="down" className="mr-px h-[9px] w-2" />
              0.20
              <span className="text-[10px] font-normal">%</span>
            </span>
          </span>
        </div>
      </td>
      <td className="py-0 pr-1 text-right text-[10px] leading-4 text-[#868686]">
        <div>H:37,817</div>
        <div>L:37,670</div>
      </td>
    </tr>
  )
}

function BoardColumns() {
  return (
    <colgroup>
      <col className="w-[121px]" />
      <col className="w-[25px]" />
      <col className="w-[76px]" />
      <col />
      <col className="w-[76px]" />
      <col className="w-[84px]" />
      <col className="w-[63px]" />
    </colgroup>
  )
}

function ProfitBox() {
  return (
    <section className="absolute top-[52px] left-[847px] w-[343px] bg-[#0e0e0e] pl-2.5">
      <div className="w-[331px] overflow-hidden rounded-lg border-4 border-[#ee3466] text-right">
        <h2 className="h-[57px] bg-[#303030] pr-12 text-[39px] leading-[64px] font-medium whitespace-nowrap text-[#dcdcdc]">
          評価損益(円)
        </h2>
        <p className="h-16 border-t-2 border-black bg-[#161616] pr-2 text-[40px] leading-[68px] text-[#5cd860]">-37,378</p>
      </div>
    </section>
  )
}

export default function App() {
  return (
    <main className={`relative min-h-screen overflow-hidden bg-black ${UI_FONT}`}>
      <header className="h-[113px] bg-[#151515] pt-1 pl-[13px]">
        <Toolbar />
        <PeriodRow />
        <QuoteHeader />
      </header>
      <div className="relative">
        <PriceChart />
        <table
          className={`absolute top-[166px] left-[341px] h-[236px] w-[547px] table-fixed border-collapse border-r-2 border-white bg-[#f7f8f2] ${BOARD_FONT}`}
        >
          <BoardColumns />
          <tbody>
            {indexQuotes.map((quote) => (
              <QuoteRow key={quote.name} quote={quote} />
            ))}
            <CfdRow />
          </tbody>
        </table>
        <table
          className={`absolute top-[116px] left-[941px] h-[199px] w-[550px] table-fixed border-collapse border-r-4 border-white bg-[#f7f8f2] ${BOARD_FONT}`}
        >
          <BoardColumns />
          <tbody>
            {domesticQuotes.map((quote) => (
              <QuoteRow key={quote.name} quote={quote} />
            ))}
          </tbody>
        </table>
      </div>
      <ProfitBox />
    </main>
  )
}
